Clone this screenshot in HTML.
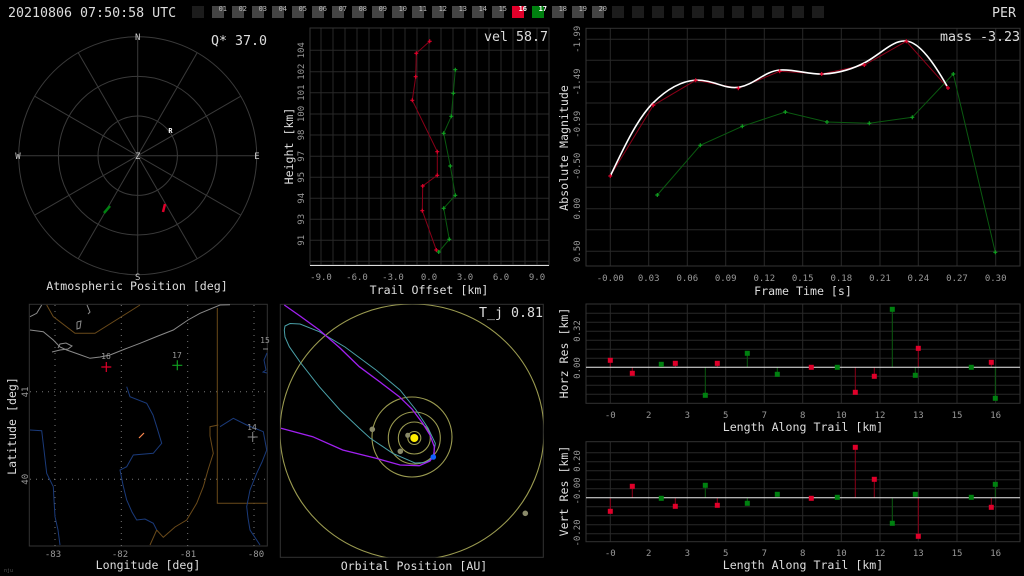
<!DOCTYPE html>
<html><head><meta charset="utf-8"><style>
html,body{margin:0;padding:0;background:#000;width:1024px;height:576px;overflow:hidden}
svg{display:block}
text{font-family:"DejaVu Sans Mono","Liberation Mono",monospace}
.t{fill:#999;font-size:9px}
.ti{fill:#ddd;font-size:11.6px}
.g{stroke:#282828;stroke-width:1;fill:none}
.bx{stroke:#333;stroke-width:1;fill:none}
.bl{font-size:7px;fill:#bbb}
</style></head><body>
<svg width="1024" height="576" viewBox="0 0 1024 576" xmlns="http://www.w3.org/2000/svg">
<rect width="1024" height="576" fill="#000"/>
<!-- header -->
<text x="8" y="17" font-size="13.3" fill="#ddd">20210806 07:50:58 UTC</text>
<text x="1016" y="17" font-size="13.3" fill="#ddd" text-anchor="end">PER</text>
<g>
<rect x="192" y="6" width="12" height="12" fill="#1c1c1c"/>
<rect x="212" y="6" width="12" height="12" fill="#444"/><text class="bl" x="227" y="11" text-anchor="end">01</text>
<rect x="232" y="6" width="12" height="12" fill="#444"/><text class="bl" x="247" y="11" text-anchor="end">02</text>
<rect x="252" y="6" width="12" height="12" fill="#444"/><text class="bl" x="267" y="11" text-anchor="end">03</text>
<rect x="272" y="6" width="12" height="12" fill="#444"/><text class="bl" x="287" y="11" text-anchor="end">04</text>
<rect x="292" y="6" width="12" height="12" fill="#444"/><text class="bl" x="307" y="11" text-anchor="end">05</text>
<rect x="312" y="6" width="12" height="12" fill="#444"/><text class="bl" x="327" y="11" text-anchor="end">06</text>
<rect x="332" y="6" width="12" height="12" fill="#444"/><text class="bl" x="347" y="11" text-anchor="end">07</text>
<rect x="352" y="6" width="12" height="12" fill="#444"/><text class="bl" x="367" y="11" text-anchor="end">08</text>
<rect x="372" y="6" width="12" height="12" fill="#444"/><text class="bl" x="387" y="11" text-anchor="end">09</text>
<rect x="392" y="6" width="12" height="12" fill="#444"/><text class="bl" x="407" y="11" text-anchor="end">10</text>
<rect x="412" y="6" width="12" height="12" fill="#444"/><text class="bl" x="427" y="11" text-anchor="end">11</text>
<rect x="432" y="6" width="12" height="12" fill="#444"/><text class="bl" x="447" y="11" text-anchor="end">12</text>
<rect x="452" y="6" width="12" height="12" fill="#444"/><text class="bl" x="467" y="11" text-anchor="end">13</text>
<rect x="472" y="6" width="12" height="12" fill="#444"/><text class="bl" x="487" y="11" text-anchor="end">14</text>
<rect x="492" y="6" width="12" height="12" fill="#444"/><text class="bl" x="507" y="11" text-anchor="end">15</text>
<rect x="512" y="6" width="12" height="12" fill="#e0002a"/><text class="bl" x="527" y="11" text-anchor="end" style="fill:#fff;font-weight:bold">16</text>
<rect x="532" y="6" width="12" height="12" fill="#008010"/><text class="bl" x="547" y="11" text-anchor="end" style="fill:#fff;font-weight:bold">17</text>
<rect x="552" y="6" width="12" height="12" fill="#444"/><text class="bl" x="567" y="11" text-anchor="end">18</text>
<rect x="572" y="6" width="12" height="12" fill="#444"/><text class="bl" x="587" y="11" text-anchor="end">19</text>
<rect x="592" y="6" width="12" height="12" fill="#444"/><text class="bl" x="607" y="11" text-anchor="end">20</text>
<g fill="#1c1c1c">
<rect x="612" y="6" width="12" height="12"/><rect x="632" y="6" width="12" height="12"/><rect x="652" y="6" width="12" height="12"/><rect x="672" y="6" width="12" height="12"/><rect x="692" y="6" width="12" height="12"/><rect x="712" y="6" width="12" height="12"/><rect x="732" y="6" width="12" height="12"/><rect x="752" y="6" width="12" height="12"/><rect x="772" y="6" width="12" height="12"/><rect x="792" y="6" width="12" height="12"/><rect x="812" y="6" width="12" height="12"/>
</g></g>

<!-- Panel 1 polar -->
<g stroke="#3a3a3a" fill="none" stroke-width="1">
<circle cx="137.7" cy="155.7" r="119"/><circle cx="137.7" cy="155.7" r="79.3"/><circle cx="137.7" cy="155.7" r="39.7"/>
<line x1="137.7" y1="36.7" x2="137.7" y2="274.7"/><line x1="18.7" y1="155.7" x2="256.7" y2="155.7"/>
<line x1="78.2" y1="52.6" x2="197.2" y2="258.8"/><line x1="197.2" y1="52.6" x2="78.2" y2="258.8"/>
<line x1="34.6" y1="96.2" x2="240.8" y2="215.2"/><line x1="240.8" y1="96.2" x2="34.6" y2="215.2"/>
</g>
<g fill="#ccc" font-size="9" text-anchor="middle">
<text x="137.7" y="40">N</text><text x="137.7" y="280">S</text><text x="18" y="159">W</text><text x="257" y="159">E</text><text x="137.7" y="159">Z</text>
<text x="170.5" y="133" font-size="7" font-weight="bold" fill="#fff">R</text>
</g>
<text x="267" y="45" text-anchor="end" font-size="13.3" fill="#ddd">Q* 37.0</text>
<line x1="104" y1="213" x2="110" y2="206" stroke="#008010" stroke-width="2.5"/>
<line x1="163" y1="212" x2="165" y2="204" stroke="#e0002a" stroke-width="2.5"/>
<text x="137" y="290" text-anchor="middle" class="ti">Atmospheric Position [deg]</text>

<!-- Panel 2 trail offset -->
<g class="g">
<path d="M321 28V265M333 28V265M345 28V265M357 28V265M369 28V265M381 28V265M393 28V265M405 28V265M417 28V265M429 28V265M441 28V265M453 28V265M465 28V265M477 28V265M489 28V265M501 28V265M513 28V265M525 28V265M537 28V265"/>
<path d="M310 50.3H549M310 71.7H549M310 92.7H549M310 114H549M310 135H549M310 156.3H549M310 177.3H549M310 198.3H549M310 219.3H549M310 240.3H549M310 261.3H549"/>
</g>
<rect x="310" y="28" width="239" height="237" class="bx"/>
<line x1="310" y1="265.5" x2="549" y2="265.5" stroke="#ddd"/>
<g class="t" text-anchor="middle">
<text x="321" y="280">-9.0</text><text x="357" y="280">-6.0</text><text x="393" y="280">-3.0</text><text x="429" y="280">0.0</text><text x="465" y="280">3.0</text><text x="501" y="280">6.0</text><text x="537" y="280">9.0</text>
</g>
<g class="t" text-anchor="middle">
<text transform="translate(304,50.3) rotate(-90)">104</text><text transform="translate(304,71.7) rotate(-90)">102</text><text transform="translate(304,92.7) rotate(-90)">101</text><text transform="translate(304,114) rotate(-90)">100</text><text transform="translate(304,135) rotate(-90)">98</text><text transform="translate(304,156.3) rotate(-90)">97</text><text transform="translate(304,177.3) rotate(-90)">95</text><text transform="translate(304,198.3) rotate(-90)">94</text><text transform="translate(304,219.3) rotate(-90)">93</text><text transform="translate(304,240.3) rotate(-90)">91</text>
</g>
<text class="ti" transform="translate(293,146) rotate(-90)" text-anchor="middle">Height [km]</text>
<text class="ti" x="429" y="294" text-anchor="middle">Trail Offset [km]</text>
<text x="548" y="41" text-anchor="end" font-size="13.3" fill="#ddd">vel 58.7</text>
<polyline points="429.7,41.3 416.3,53.3 415.7,76.7 412.3,100.3 437.3,151.7 437.3,175.3 422.7,186 422.3,210.7 436.3,250" fill="none" stroke="#8a0018"/>
<polyline points="455.3,69.7 453.3,93.3 451.3,116.3 443.7,133.3 450.3,166 455.3,195.3 443.7,208.3 449.3,239.3 438.7,252" fill="none" stroke="#0a5a10"/>
<path d="M427.7 41.3h4M429.7 39.3v4M414.3 53.3h4M416.3 51.3v4M413.7 76.7h4M415.7 74.7v4M410.3 100.3h4M412.3 98.3v4M435.3 151.7h4M437.3 149.7v4M435.3 175.3h4M437.3 173.3v4M420.7 186h4M422.7 184v4M420.3 210.7h4M422.3 208.7v4M434.3 250h4M436.3 248v4" stroke="#e0002a" stroke-width="1.2"/>
<path d="M453.3 69.7h4M455.3 67.7v4M451.3 93.3h4M453.3 91.3v4M449.3 116.3h4M451.3 114.3v4M441.7 133.3h4M443.7 131.3v4M448.3 166h4M450.3 164v4M453.3 195.3h4M455.3 193.3v4M441.7 208.3h4M443.7 206.3v4M447.3 239.3h4M449.3 237.3v4M436.7 252h4M438.7 250v4" stroke="#10a020" stroke-width="1.2"/>

<!-- Panel 3 magnitude -->
<g class="g">
<path d="M610.3 28V266M648.7 28V266M687.3 28V266M725.7 28V266M764.3 28V266M802.7 28V266M841.3 28V266M880 28V266M918.3 28V266M957 28V266M995.7 28V266"/>
<path d="M586 39.3H1020M586 60.3H1020M586 82H1020M586 103H1020M586 124.3H1020M586 145.3H1020M586 166.3H1020M586 187.3H1020M586 208.7H1020M586 229.7H1020M586 251.3H1020"/>
</g>
<rect x="586" y="28.3" width="434" height="237.7" class="bx"/>
<g class="t" text-anchor="middle">
<text x="610.3" y="281">-0.00</text><text x="648.7" y="281">0.03</text><text x="687.3" y="281">0.06</text><text x="725.7" y="281">0.09</text><text x="764.3" y="281">0.12</text><text x="802.7" y="281">0.15</text><text x="841.3" y="281">0.18</text><text x="880" y="281">0.21</text><text x="918.3" y="281">0.24</text><text x="957" y="281">0.27</text><text x="995.7" y="281">0.30</text>
<text transform="translate(580,39.3) rotate(-90)">-1.99</text><text transform="translate(580,82) rotate(-90)">-1.49</text><text transform="translate(580,124.3) rotate(-90)">-0.99</text><text transform="translate(580,166.3) rotate(-90)">-0.50</text><text transform="translate(580,208.7) rotate(-90)">0.00</text><text transform="translate(580,251.3) rotate(-90)">0.50</text>
</g>
<text class="ti" transform="translate(568,148) rotate(-90)" text-anchor="middle">Absolute Magnitude</text>
<text class="ti" x="803" y="295" text-anchor="middle">Frame Time [s]</text>
<text x="1020" y="41" text-anchor="end" font-size="13.3" fill="#ddd">mass -3.23</text>
<polyline points="610.3,176 653.3,105.3 695.7,80.3 738.3,88.3 779.7,71.3 821.7,74 864.3,65 906.3,41.3 948,88" fill="none" stroke="#8a0018"/>
<polyline points="657.3,195 700.3,145.3 742.3,126.3 785.3,112 827,122 869.3,123.3 912.3,117.3 953.3,74 995.3,252.3" fill="none" stroke="#0a5a10"/>
<path d="M610.3,176 C625,145 638,118 653,103 C667,89 682,81 696,80 C715,80 725,90 740,87 C755,84 765,71 780,70 C795,69 810,75 824,74 C840,73 853,69 866,62 C882,53 893,40 906,41 C920,42 935,65 947,86" fill="none" stroke="#fff" stroke-width="1.6"/>
<path d="M608.3 176h4M610.3 174v4M651.3 105.3h4M653.3 103.3v4M693.7 80.3h4M695.7 78.3v4M736.3 88.3h4M738.3 86.3v4M777.7 71.3h4M779.7 69.3v4M819.7 74h4M821.7 72v4M862.3 65h4M864.3 63v4M904.3 41.3h4M906.3 39.3v4M946 88h4M948 86v4" stroke="#e0002a" stroke-width="1.2"/>
<path d="M655.3 195h4M657.3 193v4M698.3 145.3h4M700.3 143.3v4M740.3 126.3h4M742.3 124.3v4M783.3 112h4M785.3 110v4M825 122h4M827 120v4M867.3 123.3h4M869.3 121.3v4M910.3 117.3h4M912.3 115.3v4M951.3 74h4M953.3 72v4M993.3 252.3h4M995.3 250.3v4" stroke="#10a020" stroke-width="1.2"/>

<!-- Panel 4 map -->
<rect x="29.3" y="304.3" width="238" height="241.7" class="bx"/>
<g stroke="#777" stroke-width="1" stroke-dasharray="1 5" fill="none">
<path d="M55 305V546M121.3 305V546M187.7 305V546M254 305V546M30 391.7H267M30 479.3H267"/>
</g>
<g fill="none" stroke-width="1">
<polyline stroke="#8a8a8a" points="30,330 43.3,331.7 53.3,340 60,347 66.7,350 78,354 90,358.3 100,357 110,355 125,349 140,343.3 158,336 173.3,330 188,320 200,313.3 220,305 230,304.7"/>
<polyline stroke="#8a8a8a" points="30,316.7 36.7,313.3 41.7,305"/>
<polyline stroke="#8a8a8a" points="52,352 60,350 68,349 72,346 66,343 60,344 58,348"/>
<polyline stroke="#8a8a8a" points="77,322 81,321 80,328 77,329 77,322"/>
<polyline stroke="#8a8a8a" points="87,305 90,312 88,314"/>
<polyline stroke="#6a4a1a" points="46.7,305 53.3,316.7 75,333.3 95,333.3 140,305"/>
<polyline stroke="#6a4a1a" points="217.3,308 217.3,503.3 267.3,503.3"/>
<polyline stroke="#6a4a1a" points="150,545 156.7,530 163.3,537.3 175,527 186.7,520 196.7,503.3 203.3,486.7 208,470 213.3,453.3 210,436 210,426.7 218.3,425"/>
<polyline stroke="#1a3a7a" points="126.7,386.7 130,396.7 146.7,403.3 153,415 156.7,426.7 161.7,443.3 153.3,453.3 133.3,455 126.7,466.7 120,470 123,485 126.7,500 132,512 136.7,520 145,519 153.3,523.3 156.7,530"/>
<polyline stroke="#1a3a7a" points="30,430 41.7,430.7 44,450 46.7,473.3 53.3,486.7 54,500 55,516.7 58,530 60,545"/>
<polyline stroke="#1a3a7a" points="220,426.7 233.3,418.3 246.7,425 263.3,431.7 266.7,450 262,462 256.7,473.3 250,490 246.7,506.7 248,518 250,530 260,545"/>
<polyline stroke="#1a3a7a" points="267,353 264,360 266,370 263,372 267,373"/>
</g>
<path d="M101.3 367h10M106.3 362v10" stroke="#e0002a" stroke-width="1.2"/>
<path d="M172.3 365.3h10M177.3 360.3v10" stroke="#10a020" stroke-width="1.2"/>
<path d="M247.7 437h10M252.7 432v10M263 349h5" stroke="#888" stroke-width="1"/>
<line x1="139" y1="438" x2="144" y2="433" stroke="#ff8a50" stroke-width="1.2"/>
<g class="t" text-anchor="middle">
<text x="106" y="359" style="font-size:8px">16</text><text x="177" y="358" style="font-size:8px">17</text><text x="252" y="430" style="font-size:8px">14</text><text x="265" y="343" style="font-size:8px">15</text>
</g>
<g class="t" text-anchor="middle">
<text x="53" y="557">-83</text><text x="120" y="557">-82</text><text x="188" y="557">-81</text><text x="256" y="557">-80</text>
<text transform="translate(28,392) rotate(-90)">41</text><text transform="translate(28,479.3) rotate(-90)">40</text>
</g>
<text class="ti" transform="translate(16,426) rotate(-90)" text-anchor="middle">Latitude [deg]</text>
<text class="ti" x="148" y="569" text-anchor="middle">Longitude [deg]</text>
<text x="4" y="572" font-size="5" fill="#555">nju</text>

<!-- Panel 5 orbit -->
<rect x="280.3" y="304.3" width="263" height="253" class="bx"/>
<svg x="280.3" y="304.3" width="263" height="253" viewBox="280.3 304.3 263 253">
<g fill="none" stroke="#9a9a50" stroke-width="1.1">
<circle cx="414.3" cy="438" r="6.5"/><circle cx="414.3" cy="438" r="16"/><circle cx="414.3" cy="438" r="26"/><circle cx="412" cy="437" r="40"/>
<ellipse cx="412" cy="432" rx="132" ry="128"/>
</g>
<polyline fill="none" stroke="#4aa0a8" stroke-width="1" points="284.3,330 285,326 290,323.5 300,324 319.3,331.7 345,347 376,370 400,390 416,410 428,428 435.3,443.3 433,458 425,462.5 415,463 392.7,453.3 370,438 359.3,428.3 340,410 319.3,386.7 300,362 289.3,346.7 285,337 284.3,330"/>
<polyline fill="none" stroke="#a020f0" stroke-width="1.3" points="284.3,305 300,316 319.3,330 340,348 359.3,366.7 380,382 399.3,396.7 412,409 422.7,423.3 430,435 434.3,446.7 434,455 430,461 419.3,465.7 400,465 376,458.3 342.7,450 312.7,436.7 281,428.3"/>
<g fill="#8a8a6a"><circle cx="372.3" cy="429.3" r="2.8"/><circle cx="400.3" cy="451.3" r="2.8"/><circle cx="407.7" cy="435.3" r="2.5"/><circle cx="525.3" cy="513.3" r="2.8"/></g>
<circle cx="414.3" cy="438" r="4" fill="#ffee00"/>
<circle cx="433.3" cy="457" r="2.8" fill="#1060ff"/>
</svg>
<text x="543" y="317" text-anchor="end" font-size="13.3" fill="#ddd">T_j 0.81</text>
<text class="ti" x="414" y="570" text-anchor="middle">Orbital Position [AU]</text>

<!-- Panel 6 horz res -->
<g class="g">
<path d="M610.3 304V403M648.7 304V403M687.3 304V403M725.7 304V403M764.3 304V403M802.7 304V403M841.3 304V403M880 304V403M918.3 304V403M957 304V403M995.7 304V403"/>
<path d="M586 313.3H1020M586 322.3H1020M586 331.3H1020M586 340.3H1020M586 349.3H1020M586 358.3H1020M586 376.3H1020M586 385.3H1020M586 394.3H1020"/>
</g>
<rect x="586" y="304" width="434" height="99.3" class="bx"/>
<g stroke-width="1">
<path d="M610.3 367.3V360.3M632.3 367.3V373.3M675.3 367.3V363.3M717.3 367.3V363.3M855.3 367.3V392.3M874.3 367.3V376.3M918.3 367.3V348.3M991.3 367.3V362.3" stroke="#8a0018"/>
<path d="M661.3 367.3V364.3M705.3 367.3V395.3M747.3 367.3V353.3M777.3 367.3V374.3M892.3 367.3V309.3M915.3 367.3V375.3M995.3 367.3V398.3" stroke="#0a5a10"/>
</g>
<line x1="586" y1="367.3" x2="1020" y2="367.3" stroke="#eee"/>
<g fill="#e0002a"><rect x="607.8" y="357.8" width="5" height="5"/><rect x="629.8" y="370.8" width="5" height="5"/><rect x="672.8" y="360.8" width="5" height="5"/><rect x="714.8" y="360.8" width="5" height="5"/><rect x="808.8" y="364.8" width="5" height="5"/><rect x="852.8" y="389.8" width="5" height="5"/><rect x="871.8" y="373.8" width="5" height="5"/><rect x="915.8" y="345.8" width="5" height="5"/><rect x="988.8" y="359.8" width="5" height="5"/></g>
<g fill="#008010"><rect x="658.8" y="361.8" width="5" height="5"/><rect x="702.8" y="392.8" width="5" height="5"/><rect x="744.8" y="350.8" width="5" height="5"/><rect x="774.8" y="371.8" width="5" height="5"/><rect x="834.8" y="364.8" width="5" height="5"/><rect x="889.8" y="306.8" width="5" height="5"/><rect x="912.8" y="372.8" width="5" height="5"/><rect x="968.8" y="364.8" width="5" height="5"/><rect x="992.8" y="395.8" width="5" height="5"/></g>
<g class="t" text-anchor="middle">
<text x="610.3" y="418">-0</text><text x="648.7" y="418">2</text><text x="687.3" y="418">3</text><text x="725.7" y="418">5</text><text x="764.3" y="418">7</text><text x="802.7" y="418">8</text><text x="841.3" y="418">10</text><text x="880" y="418">12</text><text x="918.3" y="418">13</text><text x="957" y="418">15</text><text x="995.7" y="418">16</text>
<text transform="translate(580,331) rotate(-90)">0.32</text><text transform="translate(580,368) rotate(-90)">0.00</text>
</g>
<text class="ti" transform="translate(568,353) rotate(-90)" text-anchor="middle">Horz Res [km]</text>
<text class="ti" x="803" y="431" text-anchor="middle">Length Along Trail [km]</text>

<!-- Panel 7 vert res -->
<g class="g">
<path d="M610.3 441.7V541.7M648.7 441.7V541.7M687.3 441.7V541.7M725.7 441.7V541.7M764.3 441.7V541.7M802.7 441.7V541.7M841.3 441.7V541.7M880 441.7V541.7M918.3 441.7V541.7M957 441.7V541.7M995.7 441.7V541.7"/>
<path d="M586 452.7H1020M586 461.7H1020M586 470.7H1020M586 479.7H1020M586 488.7H1020M586 506.7H1020M586 515.7H1020M586 524.7H1020M586 533.7H1020"/>
</g>
<rect x="586" y="441.7" width="434" height="100" class="bx"/>
<g stroke-width="1">
<path d="M610.3 497.7V511.3M632.3 497.7V486.3M675.3 497.7V506.3M717.3 497.7V505.3M855.3 497.7V447.3M874.3 497.7V479.3M918.3 497.7V536.3M991.3 497.7V507.3" stroke="#8a0018"/>
<path d="M705.3 497.7V485.3M747.3 497.7V503.3M892.3 497.7V523.3M995.3 497.7V484.3" stroke="#0a5a10"/>
</g>
<line x1="586" y1="497.7" x2="1020" y2="497.7" stroke="#eee"/>
<g fill="#e0002a"><rect x="607.8" y="508.8" width="5" height="5"/><rect x="629.8" y="483.8" width="5" height="5"/><rect x="672.8" y="503.8" width="5" height="5"/><rect x="714.8" y="502.8" width="5" height="5"/><rect x="808.8" y="495.8" width="5" height="5"/><rect x="852.8" y="444.8" width="5" height="5"/><rect x="871.8" y="476.8" width="5" height="5"/><rect x="915.8" y="533.8" width="5" height="5"/><rect x="988.8" y="504.8" width="5" height="5"/></g>
<g fill="#008010"><rect x="658.8" y="495.8" width="5" height="5"/><rect x="702.8" y="482.8" width="5" height="5"/><rect x="744.8" y="500.8" width="5" height="5"/><rect x="774.8" y="491.8" width="5" height="5"/><rect x="834.8" y="494.8" width="5" height="5"/><rect x="889.8" y="520.8" width="5" height="5"/><rect x="912.8" y="491.8" width="5" height="5"/><rect x="968.8" y="494.8" width="5" height="5"/><rect x="992.8" y="481.8" width="5" height="5"/></g>
<g class="t" text-anchor="middle">
<text x="610.3" y="556">-0</text><text x="648.7" y="556">2</text><text x="687.3" y="556">3</text><text x="725.7" y="556">5</text><text x="764.3" y="556">7</text><text x="802.7" y="556">8</text><text x="841.3" y="556">10</text><text x="880" y="556">12</text><text x="918.3" y="556">13</text><text x="957" y="556">15</text><text x="995.7" y="556">16</text>
<text transform="translate(580,461) rotate(-90)">0.20</text><text transform="translate(580,491) rotate(-90)">-0.00</text><text transform="translate(580,533) rotate(-90)">-0.20</text>
</g>
<text class="ti" transform="translate(568,491) rotate(-90)" text-anchor="middle">Vert Res [km]</text>
<text class="ti" x="803" y="569" text-anchor="middle">Length Along Trail [km]</text>
</svg>
</body></html>
